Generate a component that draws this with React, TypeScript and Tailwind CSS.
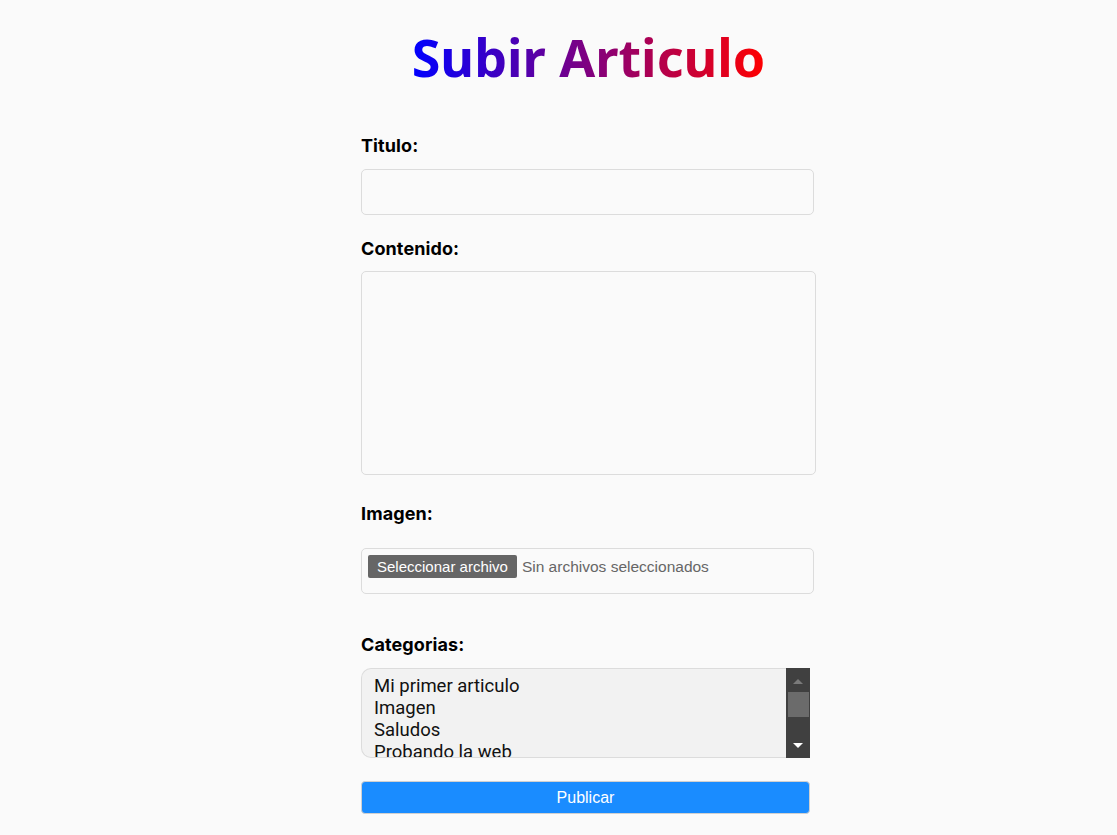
export default function App() {
  const categorias = ["Mi primer articulo", "Imagen", "Saludos", "Probando la web"];

  return (
    <div className="min-h-screen bg-[#fafafa] flex justify-center">
      <div className="w-[455px] ml-[60px] flex flex-col">
        <h1 className="text-center text-[52px] font-bold leading-none mt-[31px] font-['Noto_Sans',sans-serif]">
          <span className="bg-linear-to-r/srgb from-[#0000ff] to-[#ff0000] bg-clip-text text-transparent">
            Subir Articulo
          </span>
        </h1>

        <form className="flex flex-col mt-[47px] font-['Inter',sans-serif]" onSubmit={(e) => e.preventDefault()}>
          <label className="text-[18px] font-bold text-black leading-5 mt-[6px] tracking-[0.1px]">Titulo:</label>
          <input
            type="text"
            className="mt-[13px] w-[453px] h-[46px] border border-[#dcdcdc] rounded-[5px] bg-[#fafafa] px-3 outline-none"
          />

          <label className="text-[18px] font-bold text-black leading-5 mt-[24px] tracking-[0.1px]">Contenido:</label>
          <textarea className="mt-[12px] w-[455px] h-[204px] border border-[#dcdcdc] rounded-[5px] bg-[#fafafa] px-3 py-2 outline-none resize-none" />

          <label className="text-[18px] font-bold text-black leading-5 mt-[29px] tracking-[0.1px]">Imagen:</label>
          <div className="mt-[24px] w-[453px] h-[46px] border border-[#dcdcdc] rounded-[5px] bg-[#fafafa] flex items-start pt-[6px] pl-[6px] gap-[5px] font-['Liberation_Sans',sans-serif]">
            <span className="bg-[#666666] text-white text-[15px] leading-[23px] px-[9px] rounded-[2px]">
              Seleccionar archivo
            </span>
            <span className="text-[#666666] text-[15.5px] leading-[23px]">Sin archivos seleccionados</span>
          </div>

          <label className="text-[18px] font-bold text-black leading-5 mt-[41px] tracking-[0.1px]">Categorias:</label>
          <div className="mt-[13px] w-[449px] h-[90px] flex">
            <div className="flex-1 h-full overflow-hidden bg-[#f2f2f2] border border-r-0 border-[#dcdcdc] rounded-l-[10px] pl-[12px] pt-[6px] text-[18.5px] leading-[22px] text-[#111] font-['Roboto',sans-serif]">
              {categorias.map((c) => (
                <div key={c}>{c}</div>
              ))}
            </div>
            <div className="w-[24px] h-full bg-[#404040] flex flex-col items-center">
              <svg width="14" height="10" viewBox="0 0 14 10" className="mt-[8px]">
                <path d="M2 8 L7 3 L12 8 Z" fill="#7a7a7a" />
              </svg>
              <div className="w-[21px] h-[25px] bg-[#6b6b6b] mt-[6px]" />
              <div className="flex-1" />
              <svg width="14" height="10" viewBox="0 0 14 10" className="mb-[8px]">
                <path d="M2 3 L12 3 L7 8 Z" fill="#ffffff" />
              </svg>
            </div>
          </div>

          <button
            type="submit"
            className="mt-[23px] w-[449px] h-[33px] bg-[#1a8cff] text-white text-[16px] rounded-[4px] border border-[#d0d0d0] font-['Liberation_Sans',sans-serif]"
          >
            Publicar
          </button>
        </form>
      </div>
    </div>
  );
}
